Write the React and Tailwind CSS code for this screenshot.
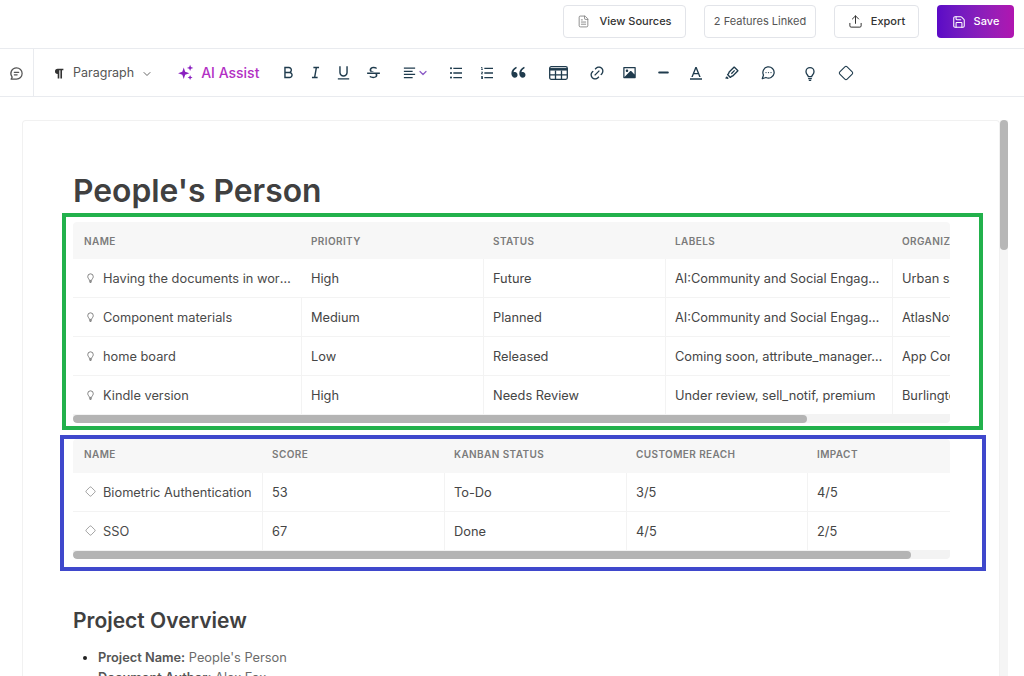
import { ChevronDown, Diamond, FileText, Minus, Save, Upload } from "lucide-react";
import { LuMessageCircleMore } from "react-icons/lu";
import {
  RiAlignLeft,
  RiBold,
  RiDoubleQuotesL,
  RiFontColor,
  RiImageFill,
  RiItalic,
  RiLink,
  RiListOrdered,
  RiListUnordered,
  RiMarkPenLine,
  RiStrikethrough,
  RiUnderline,
} from "react-icons/ri";

function Bulb({ size }) {
  return (
    <svg width={size} height={size} viewBox="0 0 24 24" fill="none" stroke="currentColor" strokeWidth="2" strokeLinecap="round" strokeLinejoin="round">
      <path d="M9.5 17.5c0-2-3.500-3.500-3.500-7.500a6 6 0 0 1 12 0c0 4-3.500 5.500-3.500 7.500z" />
      <path d="M10 20.500h4M11 23h2" />
    </svg>
  );
}

function TableIcon() {
  return (
    <svg width="19" height="14" viewBox="0 0 19 14" fill="none" stroke="currentColor" strokeWidth="1.3">
      <rect x="0.7" y="0.7" width="17.6" height="12.6" rx="1.5" />
      <path d="M0.7 3.300h17.600" strokeWidth="2.500" />
      <path d="M0.700 8.800h17.600M6.500 4.500v8.800M12.500 4.500v8.800" />
    </svg>
  );
}

const tools = [
  { icon: <RiBold size={17} />, cls: "ml-[19px]" },
  { icon: <RiItalic size={17} />, cls: "ml-[7px]" },
  { icon: <RiUnderline size={17} />, cls: "ml-[8px]" },
  { icon: <RiStrikethrough size={17} />, cls: "ml-[10px]" },
  {
    icon: (
      <>
        <RiAlignLeft size={15} />
        <ChevronDown size={12} strokeWidth={2.5} className="text-[#8b5cc6]" />
      </>
    ),
    cls: "ml-[18px] w-[28px]",
  },
  { icon: <RiListUnordered size={16} />, cls: "ml-[17px]" },
  { icon: <RiListOrdered size={16} />, cls: "ml-[11px]" },
  { icon: <RiDoubleQuotesL size={19} />, cls: "ml-[11px]" },
  { icon: <TableIcon />, cls: "ml-[20px]" },
  { icon: <RiLink size={16} />, cls: "ml-[19px]" },
  { icon: <RiImageFill size={15} />, cls: "ml-[12px]" },
  { icon: <Minus size={15} strokeWidth={3} />, cls: "ml-[14px]" },
  { icon: <RiFontColor size={16} />, cls: "ml-[13px]" },
  { icon: <RiMarkPenLine size={16} />, cls: "ml-[16px]" },
  { icon: <LuMessageCircleMore size={15} strokeWidth={2} />, cls: "ml-[16px]" },
  { icon: <Bulb size={16} />, cls: "ml-[22px]" },
  { icon: <Diamond size={16} strokeWidth={1.6} />, cls: "ml-[16px]" },
];

const featureRows = [
  ["Having the documents in workspace", "High", "Future", "AI:Community and Social Engagement", "Urban spaces"],
  ["Component materials", "Medium", "Planned", "AI:Community and Social Engagement", "AtlasNotes"],
  ["home board", "Low", "Released", "Coming soon, attribute_manager, beta", "App Company"],
  ["Kindle version", "High", "Needs Review", "Under review, sell_notif, premium", "Burlington"],
];

const scoreRows = [
  ["Biometric Authentication", "53", "To-Do", "3/5", "4/5"],
  ["SSO", "67", "Done", "4/5", "2/5"],
];

function DataTable({ columns, cols, rows, icon, headClass, thumbClass, firstRowOpen }) {
  return (
    <div className="w-[877px] overflow-hidden rounded-sm">
      <div className={`grid bg-[#f7f7f7] ${cols} ${headClass}`}>
        {columns.map((col, c) => (
          <div
            key={col}
            className={`flex items-center overflow-hidden whitespace-nowrap text-[10px] font-semibold uppercase tracking-[0.04em] text-[#7b7b7b] ${
              c === 0 ? "pl-[11px]" : "pl-[10px]"
            }`}
          >
            {col}
          </div>
        ))}
      </div>
      {rows.map((row, r) => (
        <div key={row[0]} className={`grid h-[39px] border-b border-[#f3f3f3] ${cols}`}>
          {row.map((cell, c) => {
            const last = c === row.length - 1;
            return (
              <div
                key={c}
                className={`flex min-w-0 items-center whitespace-nowrap pt-[2px] text-[12.8px] ${
                  c === 0
                    ? "gap-[6px] pl-[11px] pr-[8px] text-[#4a4a4a]"
                    : "border-l border-[#f3f3f3] pl-[9px] text-[#454545]"
                } ${last ? "" : c > 0 ? "pr-[8px]" : ""} ${c === 1 && r === 0 && firstRowOpen ? "border-l-transparent" : ""}`}
              >
                {c === 0 && <span className="-mt-[3px] flex w-[13px] shrink-0 justify-center text-[#777]">{icon}</span>}
                <span className={last ? "overflow-hidden" : "truncate"}>{cell}</span>
              </div>
            );
          })}
        </div>
      ))}
      <div className="h-2 bg-[#f3f3f3]">
        <div className={`h-2 rounded-full bg-[#b4b4b4] ${thumbClass}`} />
      </div>
    </div>
  );
}

export default function App() {
  return (
    <div className="flex h-[676px] flex-col overflow-hidden bg-white font-['Inter',sans-serif] text-[#404040]">
      <header className="flex h-[49px] shrink-0 items-start justify-end gap-[18px] border-b border-[#e9ebef] pr-[10px] pt-[5px] text-[11px] font-medium">
        <button className="flex h-[33px] w-[123px] items-center justify-center gap-[9px] rounded border border-[#e2e4e9] text-[#333]">
          <FileText size={13} strokeWidth={1.5} className="text-[#777]" />
          View Sources
        </button>
        <button className="flex h-[33px] w-[112px] items-center justify-center rounded border border-[#e2e4e9] font-normal text-[#555]">
          2 Features Linked
        </button>
        <button className="flex h-[33px] w-[85px] items-center justify-center gap-[8px] rounded border border-[#e2e4e9] text-[#333]">
          <Upload size={15} strokeWidth={1.6} />
          Export
        </button>
        <button className="flex h-[33px] w-[77px] items-center justify-center gap-[8px] rounded bg-gradient-to-r from-[#5b09c6] to-[#b015b0] text-white">
          <Save size={14} strokeWidth={1.8} />
          Save
        </button>
      </header>

      <nav className="flex h-[48px] shrink-0 items-center border-b border-[#e9ebef] text-[#1f3b4d]">
        <div className="flex h-full w-[34px] shrink-0 items-center justify-center border-r border-[#e9ebef] pt-[2px] text-[#555]">
          <svg width="15" height="15" viewBox="0 0 24 24" fill="none" stroke="currentColor" strokeWidth="2" strokeLinecap="round" strokeLinejoin="round">
            <path d="M12 3a9 9 0 0 1 0 18H3.5l1.6-3.2A9 9 0 0 1 12 3z" />
            <path d="M8.5 10h7M8.500 14h4.500" />
          </svg>
        </div>
        <div className="ml-[18px] flex items-center pt-[2px] text-[12.5px] text-[#555]">
          <svg width="13" height="13" viewBox="0 0 24 24" fill="#333">
            <path d="M10 3h11v3h-2.500v15h-3V6h-2v15h-3v-8a5 5 0 0 1 0-10z" />
          </svg>
          <span className="ml-[8px]">Paragraph</span>
          <ChevronDown size={12} strokeWidth={2} className="ml-[7px] text-[#666]" />
        </div>
        <div className="ml-[24px] flex items-center gap-[7px] text-[14px] font-medium text-[#b22fc4]">
          <svg width="17" height="17" viewBox="0 0 24 24" fill="#8a1fc0">
            <path d="M9.5 5l2 6 6 2-6 2-2 6-2-6-6-2 6-2zM18.5 1l1.2 3.3L23 5.5l-3.3 1.2-1.2 3.3-1.2-3.3L14 5.500l3.3-1.2zM18.5 15.500l1 2.500 2.500 1-2.500 1-1 2.500-1-2.500-2.500-1 2.500-1z" />
          </svg>
          AI Assist
        </div>
        {tools.map((tool, i) => (
          <span key={i} className={`flex w-5 shrink-0 items-center justify-center ${tool.cls}`}>
            {tool.icon}
          </span>
        ))}
      </nav>

      <div className="flex min-h-0 flex-1 pl-[22px] pr-4 pt-[23px]">
        <main className="min-w-0 flex-1 rounded-t border border-b-0 border-[#f1f1f1] pl-[50px]">
          <h1 className="mt-[51px] text-[31.8px] font-semibold leading-[38px] text-[#404040]">People's Person</h1>

          <section className="-ml-[11px] mt-[3px] w-[921px] border-4 border-[#22b14c] pb-[3px] pl-[7px] pt-[5px]">
            <DataTable
              columns={["Name", "Priority", "Status", "Labels", "Organization"]}
              cols="grid-cols-[228px_182px_182px_227px_58px]"
              rows={featureRows}
              icon={<Bulb size={11} />}
              headClass="h-[37px] pt-[2px]"
              thumbClass="w-[734px]"
              firstRowOpen
            />
          </section>

          <section className="-ml-[13px] mt-[5px] w-[926px] border-4 border-[#3f48cc] pb-[8px] pl-[9px]">
            <DataTable
              columns={["Name", "Score", "Kanban Status", "Customer Reach", "Impact"]}
              cols="grid-cols-[189px_182px_182px_181px_143px]"
              rows={scoreRows}
              icon={<Diamond size={11} strokeWidth={1.5} />}
              headClass="h-[34px] pb-[3px]"
              thumbClass="w-[838px]"
            />
          </section>

          <h2 className="mt-[36px] text-[21px] font-semibold leading-[28px] text-[#404040]">Project Overview</h2>
          <ul className="mt-[13px] list-disc pl-[25px] text-[12.8px] leading-[20px] text-[#6b6b6b] marker:text-[#222]">
            <li>
              <strong className="font-semibold text-[#555]">Project Name:</strong> People's Person
            </li>
            <li>
              <strong className="font-semibold text-[#555]">Document Author:</strong> Alex Fox
            </li>
          </ul>
        </main>
        <div className="w-2 shrink-0 bg-[#f5f5f5]">
          <div className="h-[130px] rounded-full bg-[#b7b7b7]" />
        </div>
      </div>
    </div>
  );
}
